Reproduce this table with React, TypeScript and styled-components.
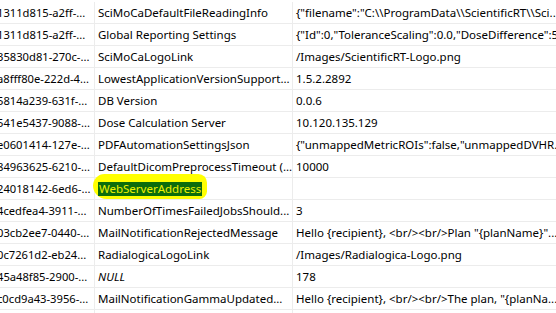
import React from "react";
import styled, { createGlobalStyle } from "styled-components";

const Global = createGlobalStyle`
  html, body { margin: 0; padding: 0; background: #ffffff; }
  body { font-family: "Noto Sans", "Segoe UI", Arial, sans-serif; }
`;

const Viewport = styled.div`
  width: 556px;
  height: 313px;
  overflow: hidden;
  background: #ffffff;
`;

const Table = styled.div`
  margin-left: -6px;
  margin-top: 2px;
  width: 760px;
  display: flex;
  flex-direction: column;
`;

const Row = styled.div`
  display: grid;
  grid-template-columns: 101px 198px 1fr;
  height: 22px;
  box-sizing: border-box;
  border-bottom: 1px solid #ececec;
`;

const Cell = styled.div<{ $pad: number; $size?: number; $italic?: boolean; $open?: boolean }>`
  box-sizing: border-box;
  display: flex;
  align-items: center;
  padding-left: ${(p) => p.$pad}px;
  border-right: 1px solid #ececec;
  font-size: ${(p) => p.$size ?? 11.5}px;
  color: #000000;
  white-space: nowrap;
  overflow: ${(p) => (p.$open ? "visible" : "hidden")};
  font-style: ${(p) => (p.$italic ? "italic" : "normal")};
  position: relative;
  z-index: ${(p) => (p.$open ? 2 : 0)};
`;

const Marker = styled.span`
  display: inline-block;
  background: #ffff00;
  padding: 7px 5px 3px 5px;
  margin: -7px -5px -3px -5px;
  border-radius: 12px 9px 8px 14px;
`;

const Selected = styled.span`
  display: inline-block;
  background: #0c6c0c;
  color: #eef200;
  line-height: 14px;
  padding: 0 1px;
`;

type RowData = {
  id: string;
  name: string;
  value: string;
  nullName?: boolean;
  highlight?: boolean;
};

const rows: RowData[] = [
  { id: "1311d815-a2ff-...", name: "SciMoCaDefaultFileReadingInfo", value: '{"filename":"C:\\\\ProgramData\\\\ScientificRT\\\\Sci...' },
  { id: "1311d815-a2ff-...", name: "Global Reporting Settings", value: '{"Id":0,"ToleranceScaling":0.0,"DoseDifference":5...' },
  { id: "35830d81-270c-...", name: "SciMoCaLogoLink", value: "/Images/ScientificRT-Logo.png" },
  { id: "a8fff80e-222d-4...", name: "LowestApplicationVersionSupport...", value: "1.5.2.2892" },
  { id: "5814a239-631f-...", name: "DB Version", value: "0.0.6" },
  { id: "541e5437-9088-...", name: "Dose Calculation Server", value: "10.120.135.129" },
  { id: "e0601414-127e-...", name: "PDFAutomationSettingsJson", value: '{"unmappedMetricROIs":false,"unmappedDVHR...' },
  { id: "84963625-6210-...", name: "DefaultDicomPreprocessTimeout (...", value: "10000" },
  { id: "24018142-6ed6-...", name: "WebServerAddress", value: "", highlight: true },
  { id: "4cedfea4-3911-...", name: "NumberOfTimesFailedJobsShould...", value: "3" },
  { id: "03cb2ee7-0440-...", name: "MailNotificationRejectedMessage", value: 'Hello {recipient}, <br/><br/>Plan "{planName}"...' },
  { id: "0c7261d2-eb24...", name: "RadialogicaLogoLink", value: "/Images/Radialogica-Logo.png" },
  { id: "45a48f85-2900-...", name: "NULL", value: "178", nullName: true },
  { id: "c0cd9a43-3956-...", name: "MailNotificationGammaUpdated...", value: 'Hello {recipient}, <br/><br/>The plan, "{planNa...' },
  { id: "", name: "", value: "" },
];

export default function App() {
  return (
    <>
      <Global />
      <Viewport>
        <Table>
          {rows.map((r, i) => (
            <Row key={i}>
              <Cell $pad={3} $size={11.2}>{r.id}</Cell>
              <Cell $pad={3} $italic={r.nullName} $open={r.highlight}>
                {r.highlight ? (
                  <Marker>
                    <Selected>{r.name}</Selected>
                  </Marker>
                ) : (
                  r.name
                )}
              </Cell>
              <Cell $pad={3}>{r.value}</Cell>
            </Row>
          ))}
        </Table>
      </Viewport>
    </>
  );
}
